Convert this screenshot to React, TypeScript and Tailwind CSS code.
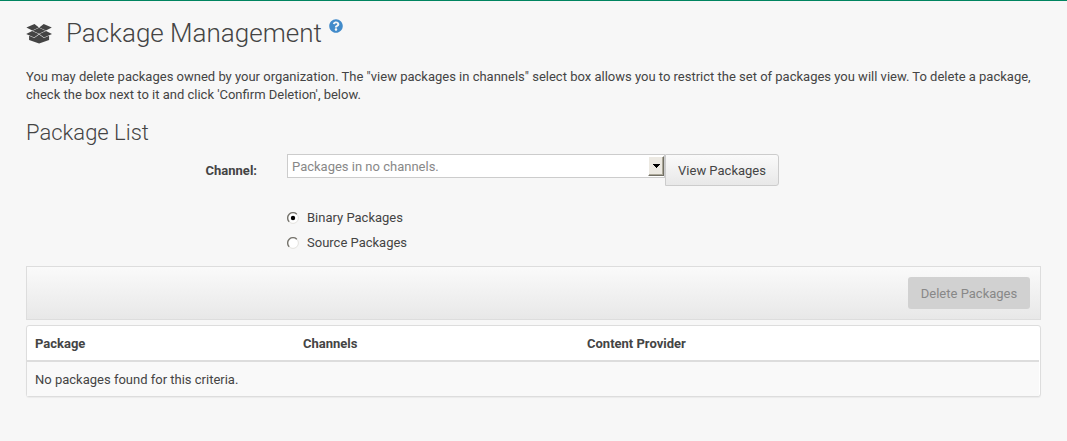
import { useState } from "react";
import { FaQuestionCircle } from "react-icons/fa";

function PackageIcon() {
  return (
    <svg width="27" height="20" viewBox="0 0 27 20" fill="#444" className="shrink-0">
      <path d="M8.5 0 12.9 3.4 6.3 6.5 0.4 3.6zM17.7 0 13.3 3.4 19.9 6.5 25.8 3.6z" />
      <path d="M13.1 3.7 19.6 6.8 13.1 9.7 6.6 6.8z" />
      <path d="M6.1 7 12.8 10 8.2 13.4 0.2 9.9zM20.1 7 13.4 10 18 13.4 26 9.9z" />
      <path d="M3.1 11.7 8.3 14 13.1 10.4 17.9 14 23.1 11.7V15.9L13.1 19.6 3.1 15.9z" />
    </svg>
  );
}

function Radio({ label, checked, onSelect }: { label: string; checked: boolean; onSelect: () => void }) {
  return (
    <label className="flex h-[25px] items-center gap-2">
      <input type="radio" name="kind" className="sr-only" checked={checked} onChange={onSelect} />
      <svg width="12" height="12" viewBox="0 0 12 12" className="mt-px shrink-0">
        <circle cx="6" cy="6" r="5.4" fill="#fff" stroke="#e4e2de" />
        <path d="M2.2 9.8A5.3 5.3 0 0 1 9.8 2.2" fill="none" stroke="#77756e" strokeWidth="1.4" />
        {checked && <circle cx="6" cy="6" r="2.2" fill="#000" />}
      </svg>
      {label}
    </label>
  );
}

export default function App() {
  const [kind, setKind] = useState("binary");
  return (
    <main className="h-[441px] border-t border-[#008560] bg-[#f7f7f7] px-[26px] font-[Roboto,sans-serif] text-[13px] leading-[18px] text-[#444]">
      <h1 className="flex h-[67px] pt-[18px] text-[26px] leading-[29px] font-light">
        <span className="mr-[13px] pt-[5px]"><PackageIcon /></span>
        Package Management
        <FaQuestionCircle className="ml-[7px] text-[14px] text-[#428bca]" />
      </h1>
      <p>
        You may delete packages owned by your organization. The "view packages in channels" select box allows you to restrict the set of packages you will view. To delete a package, check the box next to it and click 'Confirm Deletion', below.
      </p>
      <h2 className="mt-4 text-[22px] leading-[26px] font-light">Package List</h2>
      <div className="mt-2 flex items-start">
        <div className="w-[231px] pt-2 text-right font-bold">Channel:</div>
        <div className="ml-[30px] flex h-6 w-[378px] items-center justify-between border border-[#ccc] bg-white pl-1 text-[#888]">
          <span className="pt-0.5">Packages in no channels.</span>
          <button aria-label="Open channel list" className="flex h-5 w-4 items-center justify-center border border-t-white border-r-[#716f64] border-b-[#716f64] border-l-white bg-[#ece9e2] shadow-[inset_-1px_-1px_#aca899]">
            <svg width="7" height="4" viewBox="0 0 7 4" shapeRendering="crispEdges"><path d="M0 0H7V1H6V2H5V3H4V4H3V3H2V2H1V1H0z" fill="#000" /></svg>
          </button>
        </div>
        <button className="h-8 w-[114px] rounded-r-[3px] border border-[#ccc] bg-gradient-to-b from-[#fafafa] to-[#e8e8e8] pt-0.5">View Packages</button>
      </div>
      <div className="mt-[19px] ml-[261px]">
        <Radio label="Binary Packages" checked={kind === "binary"} onSelect={() => setKind("binary")} />
        <Radio label="Source Packages" checked={kind === "source"} onSelect={() => setKind("source")} />
      </div>
      <div className="mt-[11px] flex h-[54px] items-center justify-end border border-[#ddd] bg-gradient-to-b from-[#fafafa] to-[#e8e8e8] pr-[10px]">
        <button disabled className="h-8 w-[122px] rounded-[3px] bg-[#d1d1d1] pt-0.5 text-[#888]">Delete Packages</button>
      </div>
      <div className="mt-[5px] h-[72px] rounded-[3px] border border-[#ddd] bg-white pr-px shadow-[0_1px_1px_rgba(0,0,0,0.05)]">
        <table className="w-full table-fixed border-separate border-spacing-0 text-left">
          <thead>
            <tr className="h-9">
              <th className="w-[268px] border-b-2 border-[#ddd] px-2 pt-0.5 pb-0">Package</th>
              <th className="w-[284px] border-b-2 border-[#ddd] px-2 pt-0.5 pb-0">Channels</th>
              <th className="border-b-2 border-[#ddd] px-2 pt-0.5 pb-0">Content Provider</th>
            </tr>
          </thead>
          <tbody>
            <tr className="h-[34px]">
              <td colSpan={3} className="bg-[#f9f9f9] px-2 pt-0.5 pb-0">No packages found for this criteria.</td>
            </tr>
          </tbody>
        </table>
      </div>
    </main>
  );
}
